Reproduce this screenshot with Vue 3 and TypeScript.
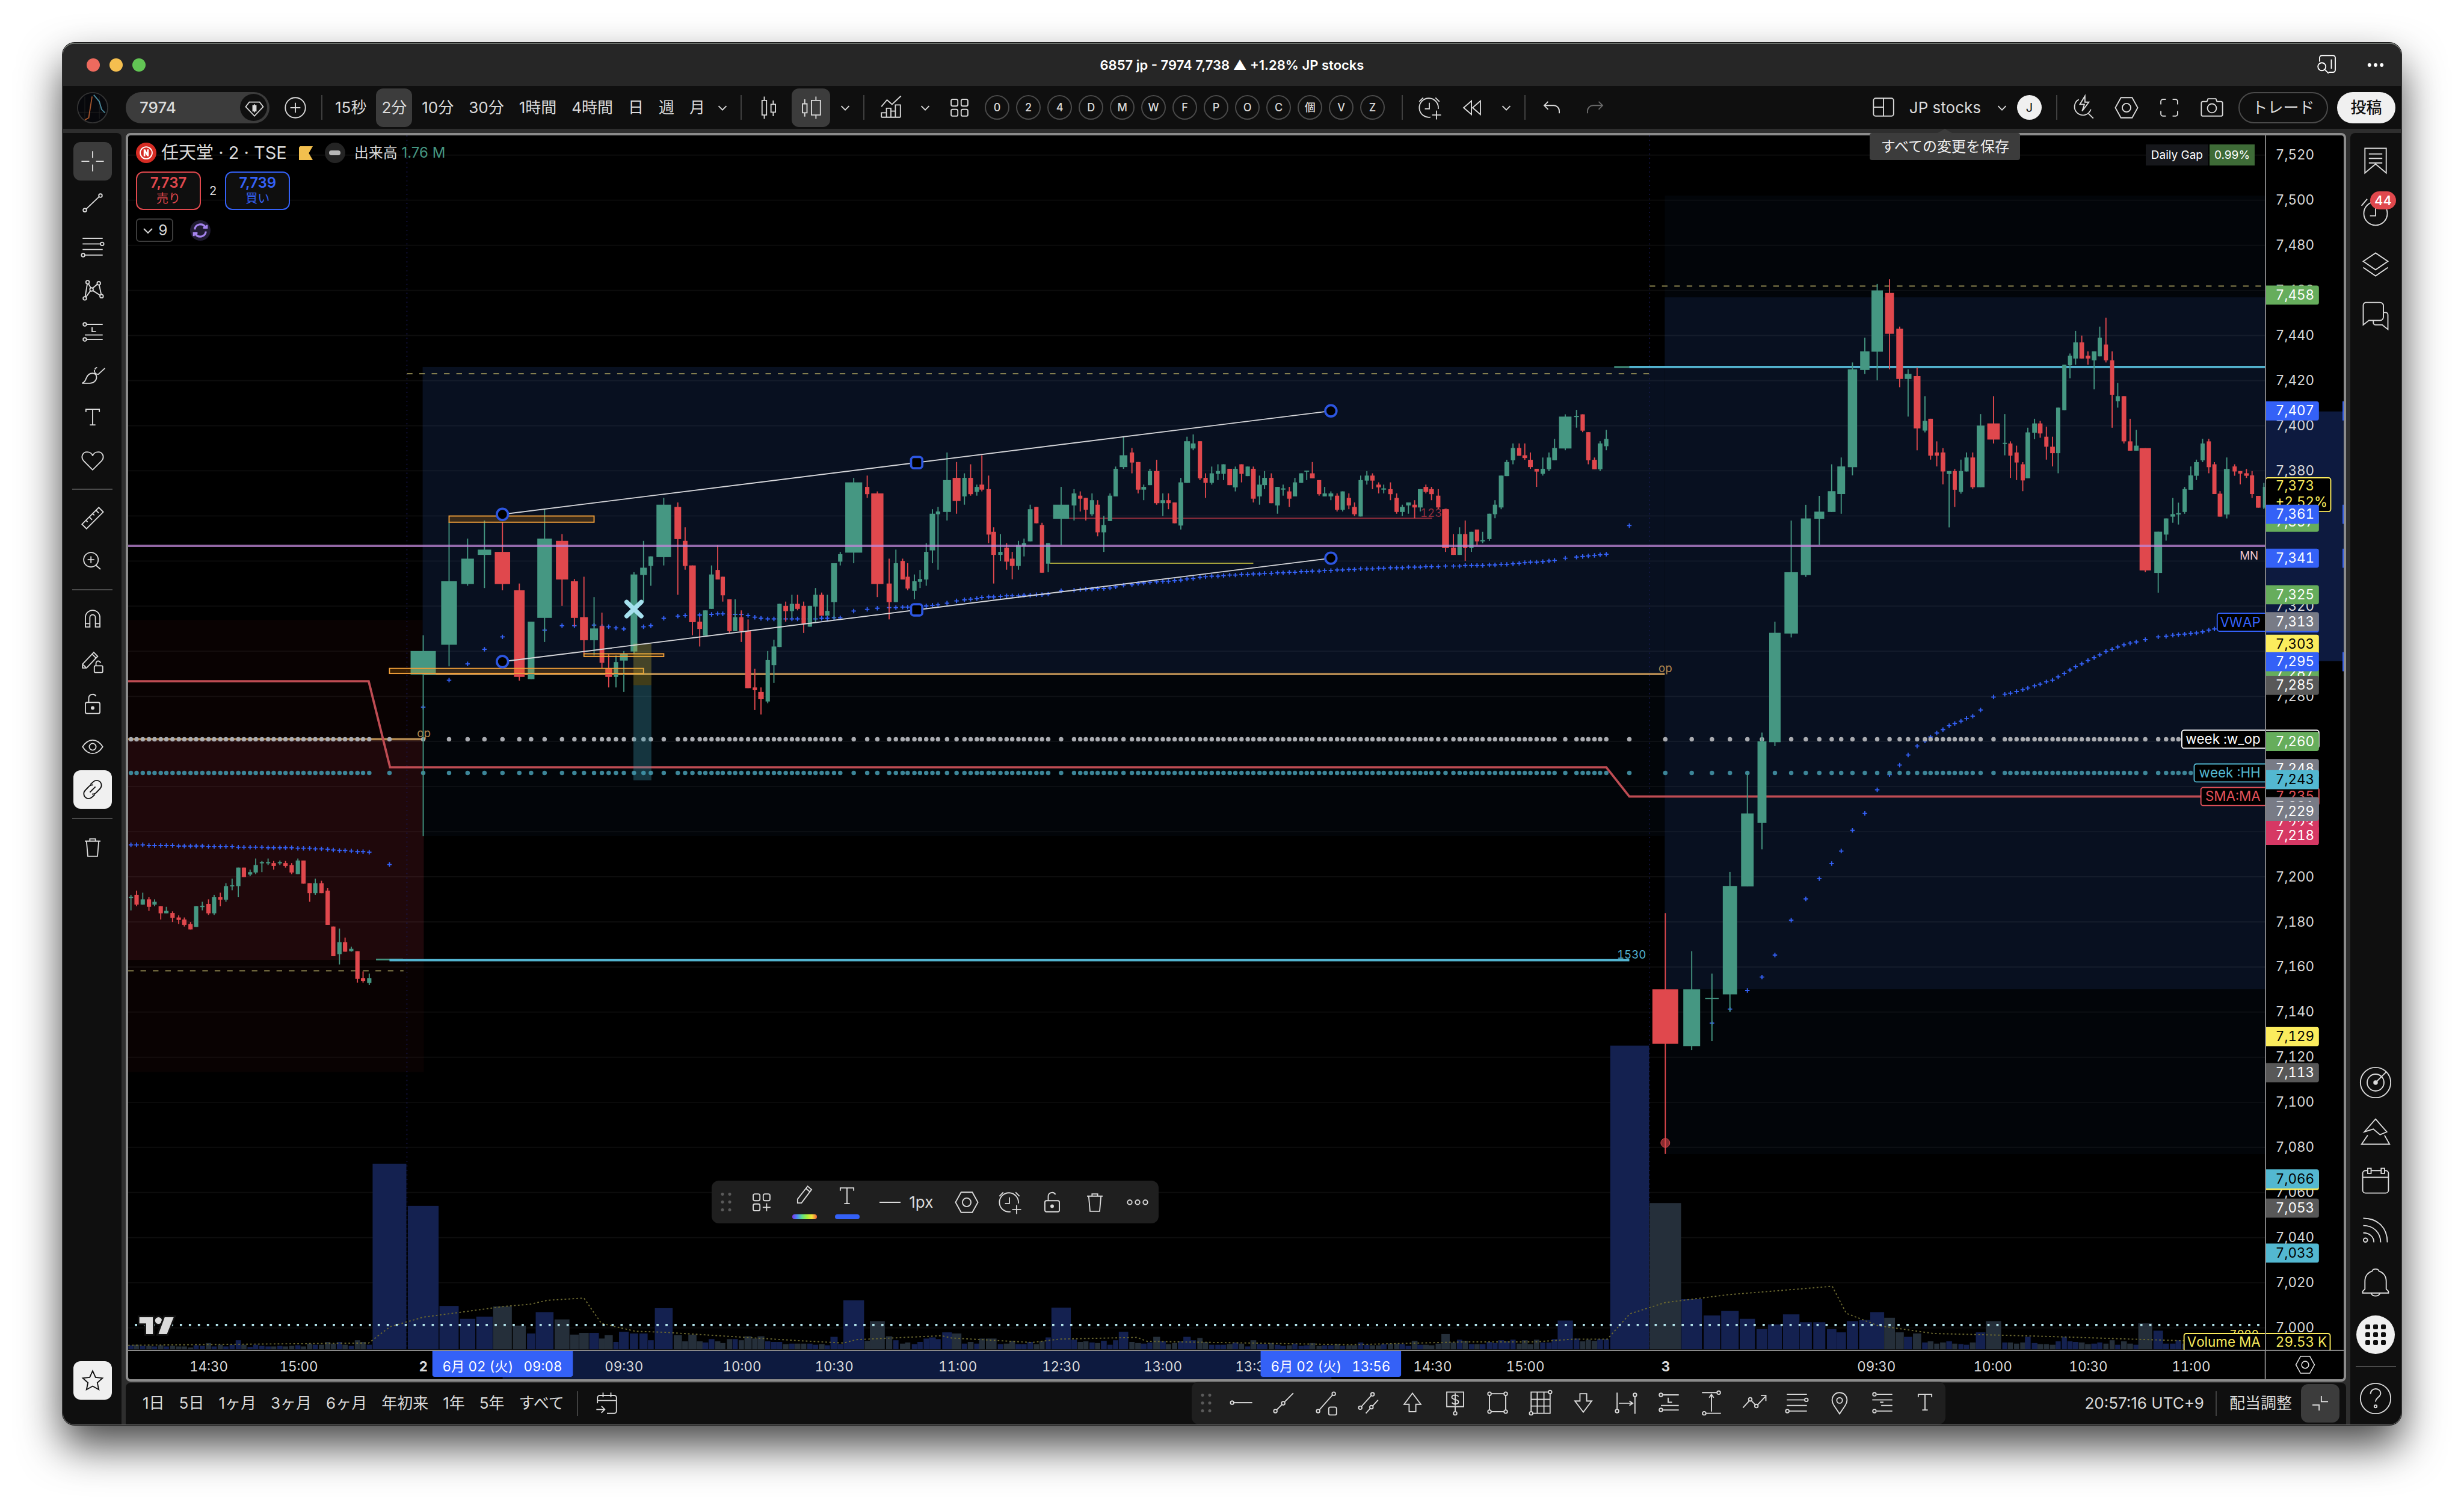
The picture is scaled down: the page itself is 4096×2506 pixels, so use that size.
<script setup lang="ts">
interface Candle { x: number; w: number; top: number; bottom: number; high: number; low: number; up: boolean; vol: number }
interface Stretch { ox: number; oy: number; sx: number; sy: number; rows: string }
interface Tag { y: number; text: string; bg: string; fg?: string; border?: string; w?: number }

/* ---------- icons (28 unit grid) ---------- */
const node = (x: number, y: number, r = 1.5) => `<circle cx="${x}" cy="${y}" r="${r}"/>`
const icons: Record<string, string> = {
  chevron: '<path d="M10.500 12.500l3.500 3.500 3.500-3.500"/>',
  plusCircle: '<circle cx="14" cy="14" r="9"/><path d="M14 9.500v9M9.500 14h9"/>',
  diamond: '<path d="M9 8h10l3.500 4.500L14 21.500 5.500 12.500z"/><path fill="currentColor" d="M12.500 11.500h3v5h-3z"/><path d="M14 10v8"/>',
  candles: '<path d="M8.500 7.500h4v13h-4zM10.500 4v3.500M10.500 20.500v3.500M16.500 11h4v7h-4zM18.500 7.500v3.500M18.500 18v3.500"/>',
  volCandles: '<path d="M6.500 10.500h4v8h-4zM8.500 6.500v4M8.500 18.500v3.500M14.500 7.500h8v13h-8zM18.500 4v3.500M18.500 20.500v3.500"/>',
  indicators: '<path d="M5.500 13l5-6 4.500 4 8-7.500M5.500 22.500h17M5.500 22.500v-4h4.500v4M10 22.500v-8h4v8M14 17h4M18 22.500v-11h4.500v11"/>',
  grid: '<rect x="6.500" y="6.500" width="6" height="6" rx="1.500"/><rect x="15.500" y="6.500" width="6" height="6" rx="1.500"/><rect x="6.500" y="15.500" width="6" height="6" rx="1.500"/><rect x="15.500" y="15.500" width="6" height="6" rx="1.500"/>',
  gridPlus: '<rect x="6.500" y="6.500" width="6" height="6" rx="1.500"/><rect x="15.500" y="6.500" width="6" height="6" rx="1.500"/><rect x="6.500" y="15.500" width="6" height="6" rx="1.500"/><path d="M18.500 15v7M15 18.500h7"/>',
  alarmAdd: '<path d="M15 22.400A8.500 8.500 0 1 1 22 15M5 8.500L8.500 5M23 8.500L19.500 5M14 9.500v5.500h-4M20.500 16.500v8M16.500 20.500h8"/>',
  rewind: '<path d="M13.500 8v12L6.500 14zM21.500 8v12L14.500 14z"/>',
  undo: '<path d="M10.500 8.500L7 12l3.500 3.500M7 12h8.500a5 5 0 0 1 5 5v2"/>',
  redo: '<path d="M17.500 8.500L21 12l-3.500 3.500M21 12h-8.500a5 5 0 0 0-5 5v2"/>',
  layout: '<rect x="4.500" y="5.500" width="18" height="16" rx="2"/><path d="M13.500 5.500v16M4.500 13.500h9"/>',
  boltSearch: '<path d="M9.500 6.600a7.500 7.500 0 1 0 10.800 8.900M18 19l4.500 4.500M15 3.500l-4.500 7.500h4l-2 6 6-8h-3.500z"/>',
  hex: '<path d="M9 5h10l5 9-5 9H9l-5-9z"/><circle cx="14" cy="14" r="3.800"/>',
  fullscreen: '<path d="M6.500 11V8.500a2 2 0 0 1 2-2H11M17 6.500h2.500a2 2 0 0 1 2 2V11M21.500 17v2.500a2 2 0 0 1-2 2H17M11 21.500H8.500a2 2 0 0 1-2-2V17"/>',
  camera: '<path d="M6 8.500h3.500l1-2.500h7l1 2.500H22a1.500 1.500 0 0 1 1.500 1.500v10a1.500 1.500 0 0 1-1.500 1.500H6A1.500 1.500 0 0 1 4.500 20V10A1.500 1.500 0 0 1 6 8.500z"/><circle cx="14" cy="14.500" r="4"/>',
  windowSearch: '<path d="M7 11V7.500A2 2 0 0 1 9 5.500h10a2 2 0 0 1 2 2v11a2 2 0 0 1-2 2h-4M17.500 9v8.500"/><circle cx="9" cy="15.500" r="3.500"/><path d="M11.500 18l3.500 3.500"/>',
  more: '<g fill="currentColor" stroke="none"><circle cx="8.500" cy="14" r="1.600"/><circle cx="14" cy="14" r="1.600"/><circle cx="19.500" cy="14" r="1.600"/></g>',
  cross: '<path d="M14 5v6M14 17v6M4 14h7M17 14h7"/>',
  trend: `${node(7, 19.500)}${node(21, 6.500)}<path d="M8.200 18.500L19.800 7.500"/>`,
  fib: `<path d="M5 6.500h18M5 11.500h16M5 16.500h18M7 21.500h16"/>${node(22.500, 11.500)}${node(5.500, 21.500)}`,
  pattern: `${node(7, 22)}${node(9.500, 7.500)}${node(13, 14)}${node(19.500, 8.500)}${node(22, 20)}<path d="M7.300 20.500L9.200 9M10.200 8.900l2.200 3.700M14 12.900l4.200-3.600M19.800 10l1.900 8.500M8 20.800l4-5.500M14.200 15l6.500 4.300"/>`,
  longPos: `<path d="M9 7h14M9 20.500h14M7 16.500h16M13.500 9.500v4H17"/>${node(7, 7)}${node(7, 20.500)}`,
  brush: '<path d="M4.500 21.500c3-1 3-3 4-5 1-2.500 3-4 5.500-4 2.500 0 3.500 2 3.500 3.500 0 3-2.500 5.500-6 5.500zM15.500 9.500c0 2.500 1.500 4 3.500 4L25 8M16 9c.5-1 1-1.500 2-1.500"/>',
  text: '<path d="M8 9V6.500h12V9M14 6.500v14M11.500 20.500h5"/>',
  heart: '<path d="M14 22.500L6 14.500C3 11 5 6.500 9 6.500c2.500 0 4.500 1.500 5 3.500.5-2 2.500-3.500 5-3.500 4 0 6 4.500 3 8z"/>',
  ruler: '<path d="M4.500 19.500l15-15 4 4-15 15zM8 16l1.500 1.500M11 13l2.500 2.500M14 10l1.500 1.500M17 7l2.500 2.500"/>',
  zoomIn: '<circle cx="12.500" cy="13" r="6.500"/><path d="M12.500 10v6M9.500 13h6M17 18l4 3.500"/>',
  magnet: '<path d="M7.500 21.500V13a6.500 6.500 0 0 1 13 0v8.500h-4V13a2.500 2.500 0 0 0-5 0v8.500zM7.500 18.500h4M16.500 18.500h4"/>',
  pencilLock: '<path d="M5 20v-3.500L15 6l3.500 3.500L8.500 20zM13.500 7.500l3.500 3.500M5.500 17L8 19.500"/><rect x="15.500" y="18" width="7.500" height="6" rx="1"/><path d="M17 18v-2a2 2 0 0 1 4-.5"/>',
  unlock: '<rect x="7.500" y="12.500" width="13" height="10" rx="1.500"/><path d="M10.500 12.500V9a3.500 3.500 0 0 1 6.500-2"/><circle cx="14" cy="17.500" r="1.100" fill="currentColor"/>',
  eye: '<path d="M5 14c5-8 13-8 18 0-5 8-13 8-18 0z"/><circle cx="14" cy="14" r="3"/>',
  link: '<path d="M12 9.500l2.500-2.300a4.300 4.300 0 0 1 6.200 6L17 17M16 18.500l-2.500 2.300a4.300 4.300 0 0 1-6.200-6L11 11M17 17c-1 .9-2.300 1.300-3.500 1M11 11c1-.9 2.300-1.300 3.500-1M11.500 16.500l5-5"/>',
  trash: '<path d="M7 8.500h14M8.500 8.500l1.200 13.500h8.600L19.500 8.500M11.500 8.500v-2h5v2"/>',
  star: '<path d="M14 5.500l2.600 5.700 6.200.7-4.600 4.200 1.300 6.100L14 19.100l-5.500 3.100 1.300-6.100-4.600-4.200 6.200-.7z"/>',
  pencil: '<path d="M8 20v-3.500L17 5l3.500 3L11.500 20zM15.500 7l3.500 3"/>',
  dots3: `${node(7, 14, 2)}${node(14, 14, 2)}${node(21, 14, 2)}`,
  goto: '<path d="M5.500 14V9a2 2 0 0 1 2-2h13a2 2 0 0 1 2 2v12a2 2 0 0 1-2 2H14M5.500 11.500h17M10.500 4.500v4M17.500 4.500v4M4.500 19.500h7.500M9 16.500l3 3-3 3"/>',
  hRay: `${node(5.500, 14)}<path d="M7 14h16.500"/>`,
  infoLine: `${node(6, 21.500)}${node(13, 14.500)}<path d="M7 20.500l5-5M14 13.500l8-8"/>`,
  rayBox: `${node(6, 21.500)}${node(20, 6)}<path d="M7 20.500L19 7"/><rect x="15.500" y="18" width="7" height="7" rx="1.500"/>`,
  channel: `${node(5.500, 18.500)}${node(16.500, 6.500)}${node(15.500, 18)}<path d="M6.500 17.500l9-10M10.500 23.500l4-4.500M16.500 17l5-5.500"/>`,
  arrowUp: '<path d="M14 5.500L21.500 15.500H17v6.500h-6v-6.500H6.500z"/>',
  priceNote: `<path d="M6.500 4.500h15v13h-15z"/><path d="M17 8.500c-.8-1-1.700-1.300-3-1.300-1.800 0-3 .8-3 2 0 2.700 6 1.300 6 4 0 1.200-1.200 2-3 2-1.300 0-2.400-.4-3-1.300M14 5.500v11M14 17.500v4"/>${node(14, 23.500)}`,
  rect: `${node(6.500, 6)}${node(21, 6)}${node(6.500, 22)}${node(21, 22)}<path d="M8 6h11.500M8 22h11.500M6.500 7.500v13M21 7.500v13"/>`,
  gridBox: `${node(22.500, 4.500)}${node(5.500, 23.500)}<path d="M5.500 22V4.500H21M22.500 6v17.500H7M11 4.500v19M17 4.500v19M5.500 11h17M5.500 17h17"/>`,
  arrowDown: '<path d="M14 22.500L6.500 12.500H11V6h6v6.500h4.500z"/>',
  dateRange: `${node(6, 21.500)}${node(22, 7)}<path d="M6 5v15M22 8.500V24M7.500 14.500h12M17 12.500l3 2-3 2"/>`,
  priceRange: `${node(20.500, 5)}${node(7.500, 23.500)}<path d="M5.500 5H19M9 23.500h13.500M14 22V7M12 9.500l2-3 2 3"/>`,
  zigzag: `${node(10.500, 11)}${node(16, 17)}<path d="M4 18.500l5.500-6M11.500 12.200l3.500 3.600M17 16l7-7.500M20 7.500h4.500v5"/>`,
  pin: '<path d="M14 24l-5-7.500c-4-6 0-11.500 5-11.500s9 5.500 5 11.500z"/><circle cx="14" cy="12" r="2.500"/>',
  shortPos: `<path d="M9 6.500h14M5 11.500h18M9 21.500h14M13 16.500h10"/>${node(7, 6.500)}${node(7, 21.500)}<path d="M15 13.500h-3"/>`,
  collapse: '<path d="M7 15.500h6v5M15 7.500v5h6"/>',
  sync: '<path d="M8 13a6.200 6.200 0 0 1 11.500-2.500M20 15a6.200 6.200 0 0 1-11.500 2.500M17 11h4v-3M11 17H7v3"/>',
}
/* wide rail icons (44 unit grid) */
const rail: Record<string, string> = {
  list: '<path d="M12.500 11h19v22l-9.500-8-9.500 8zM16 16h12M16 20h12M16 24h12"/>',
  alarm: '<circle cx="22" cy="23" r="10.500"/><path d="M22 16v9h-5M9.500 16l5-6"/>',
  layers: '<path d="M22 12l11 7.500L22 27l-11-7.500zM11 25l11 7.500L33 25"/>',
  chat: '<path d="M13 10h13a3 3 0 0 1 3 3v10a3 3 0 0 1-3 3H16l-5 4V13a3 3 0 0 1 2-3zM29 19h2a2 2 0 0 1 2 2v13l-5-4h-6a2 2 0 0 1-2-2v-2"/>',
  radar: '<circle cx="22" cy="22" r="13.500"/><circle cx="22" cy="22" r="7.500"/><circle cx="22" cy="22" r="1.500" fill="currentColor"/><path d="M22 22L31.500 12.500"/>',
  peaks: '<path d="M12 22l10-11.500L32 22l-6 2.500-6-5zM15 25l-5.500 8h25L30 25"/>',
  calendar: '<rect x="10.500" y="12.500" width="23" height="20" rx="2.500"/><path d="M10.500 18.500h23"/><rect x="15" y="10.500" width="3" height="4.500" fill="#0f0f0f"/><rect x="27" y="10.500" width="3" height="4.500" fill="#0f0f0f"/>',
  rss: '<circle cx="13" cy="30.500" r="1.800"/><path d="M11 24c5.500 0 9.500 3.500 9.500 8.500M11 17.500c9 0 15.500 6 15.500 15M11 11c13 0 21.500 8.500 21.500 21.500"/>',
  bell: '<path d="M12.500 28v-7c0-5 3-8 6.500-9 .5-2.500 5.500-2.500 6 0 3.500 1 6.500 4 6.500 9v7l2 2v1.500h-23V30zM18 31.500c1 3.500 7 3.500 8 0"/>',
  help: '<circle cx="22" cy="22" r="13.500"/><path d="M17.500 18c0-6 9-6 9-.5 0 3.500-4.500 3.500-4.500 7.500"/><circle cx="22" cy="29" r="1.200"/>',
}
const leftTools: string[][] = [
  ['cross', 'trend', 'fib', 'pattern', 'longPos', 'brush', 'text', 'heart'],
  ['ruler', 'zoomIn'],
  ['magnet', 'pencilLock', 'unlock', 'eye', 'link'],
  ['trash'],
]
const intervals = ['15秒', '2分', '10分', '30分', '1時間', '4時間', '日', '週', '月']
const templates = ['0', '2', '4', 'D', 'M', 'W', 'F', 'P', 'O', 'C', '個', 'V', 'Z']
const ranges = ['1日', '5日', '1ヶ月', '3ヶ月', '6ヶ月', '年初来', '1年', '5年', 'すべて']
const favourites = ['hRay', 'infoLine', 'rayBox', 'channel', 'arrowUp', 'priceNote', 'rect', 'gridBox', 'arrowDown', 'dateRange', 'longPos', 'priceRange', 'zigzag', 'fib', 'pin', 'shortPos', 'text']

/* ---------- tape: x width top bottom high low volume; negative width = falling ---------- */
const tape: Stretch[] = [
  { ox: 100, oy: 1400, sx: 1.96, sy: 1.3635, rows: `261 15 265 267 260 298 7;280 -15 260 284 250 288 8;301 15 271 284 255 284 6;323 -15 271 289 266 299 6;343 15 277 284 271 288 5;364 -15 288 305 288 320 7;384 15 299 305 289 305 5;405 -15 304 316 300 326 6;427 -15 315 321 310 331 5;447 -15 320 333 315 337 5;468 -15 331 344 326 344 3;488 15 288 338 288 338 7;510 15 287 289 277 298 6;531 -15 282 305 271 309 11;551 15 266 305 260 309 5;572 -15 266 272 255 288 8;592 15 239 272 232 277 5;613 15 237 239 221 249 8;635 15 194 239 194 266 16;655 -15 194 217 194 217 8;676 15 205 211 199 215 4;696 15 188 206 172 210 8;717 15 181 183 178 205 6;739 15 181 183 172 188 5;758 -15 183 190 178 199 5;780 15 181 183 177 188 6;800 -15 183 190 178 194 5;821 -15 188 206 183 210 6;843 15 177 210 172 210 7;863 -15 177 233 177 233 5;884 -15 232 256 232 277 10;903 15 232 256 221 260 8;925 -15 232 256 226 256 8;947 -15 250 333 244 333 13;966 -15 337 409 337 409 10;988 15 375 404 342 429 13;1007 -15 375 398 364 398 8;1029 15 391 397 386 398 6;1050 -15 397 464 397 473 16;1070 -15 462 469 446 473 13;1092 15 462 474 451 479 8` },
  { ox: 700, oy: 700, sx: 1.4255, sy: 2.24, rows: `75 64 1024 1118 961 1761 255;141 40 746 999 510 1085 77;188 32 656 757 576 764 54;231 34 620 641 504 773 58;276 -39 629 757 510 782 76;319 -27 782 1127 755 1142 42;349 17 907 1136 907 1136 28;384 37 576 892 459 988 66;427 -31 585 739 558 844 53;459 -18 746 892 737 925 26;483 -20 889 981 728 1034 29;509 20 934 981 809 1042 29;529 -12 925 1071 871 1092 19;546 -17 1092 1127 1037 1169 25;564 11 1068 1127 1042 1169 13;584 20 1036 1062 1024 1187 31;610 17 719 1026 710 1034 28;634 17 692 721 585 827 28;653 12 647 685 647 764 16;685 37 441 650 414 683 73;721 -17 450 578 432 800 25;740 -12 585 685 531 700 14;758 -17 683 909 683 961 26;777 -12 907 936 889 1006 14;791 12 862 963 862 963 12;807 12 719 856 683 856 18;822 -11 701 739 603 739 14;836 -11 728 802 728 827 11;852 -11 818 945 818 952 18;866 11 889 945 818 945 18;882 -11 889 945 862 988 16;899 -15 943 1172 898 1172 23;916 -11 1169 1180 1095 1259 19;932 -14 1187 1216 1169 1277 23;949 11 1060 1225 1024 1232 14;965 12 1006 1080 979 1151 13;980 11 836 1008 836 1008 13;995 -12 844 865 827 907 9;1010 11 836 865 800 892 10;1025 -12 836 856 800 862 10;1040 -11 844 916 827 952 10;1056 11 844 927 844 927 10;1070 11 800 847 773 909 8;1086 -12 800 883 791 883 9;1100 11 864 883 800 883 7;1117 15 674 829 674 898 22;1133 11 638 668 629 683 9;1167 43 352 632 334 674 87;1201 -11 370 399 325 414 15;1228 -31 396 757 388 809 50;1258 -13 755 829 656 898 23;1275 11 674 829 620 829 16;1291 -11 665 739 656 739 10;1305 -11 728 775 674 782 12;1321 11 746 784 719 818 9;1335 11 737 748 701 773 13;1351 11 629 739 594 764 19;1367 14 477 623 459 674 21;1382 11 468 479 450 700 18;1404 20 343 470 233 504 30;1428 -20 334 426 271 477 28;1448 11 334 408 316 441 10;1464 -12 334 399 280 405 13;1479 11 370 390 361 405 10;1493 -12 361 381 244 388 19;1509 -11 379 560 325 594 19;1523 -12 549 641 531 755 19;1539 11 629 641 558 665 9;1555 -12 612 668 594 700 10` },
  { ox: 1750, oy: 650, sx: 1.3067, sy: 2.24, rows: `66 -11 768 797 741 850 15;81 11 715 797 697 812 9;94 10 706 717 688 759 9;108 11 571 699 553 699 13;123 -10 562 627 562 627 9;136 -10 634 824 625 824 14;150 10 706 788 706 822 21;180 37 553 609 482 715 74;210 11 508 556 491 616 17;225 -10 517 529 500 580 13;238 -10 526 573 526 616 14;252 10 535 591 508 598 12;265 -10 553 663 535 679 11;279 11 634 663 598 741 15;294 10 517 618 508 618 8;307 10 410 520 401 520 16;326 18 356 403 282 410 31;345 -10 345 385 327 428 13;359 -11 383 493 383 508 11;373 11 482 493 473 535 10;387 10 419 475 410 475 12;402 -13 419 547 374 553 22;417 11 535 547 508 598 14;430 -10 535 547 508 571 9;444 -10 544 627 544 627 11;458 11 464 636 446 652 14;473 14 300 466 282 466 22;488 11 309 329 273 336 16;503 -10 300 448 300 455 20;516 -10 446 466 428 526 13;530 10 428 466 401 473 8;545 10 419 430 392 455 8;558 10 392 430 392 455 8;572 -11 410 475 410 475 9;585 11 410 484 401 500 12;600 -10 392 430 392 464 10;614 10 401 439 401 439 5;627 -11 410 529 401 544 16;641 11 473 520 437 553 9;654 11 446 475 419 491 9;669 -10 446 547 428 547 11;683 11 482 556 482 589 8;697 11 488 493 473 517 6;711 -10 500 529 482 562 7;724 10 464 520 446 520 10;738 10 428 466 428 466 6;752 11 417 421 417 455 7;765 -11 428 448 383 448 11;780 -10 455 511 455 517 6;793 10 508 520 482 520 7;807 11 508 520 500 535 7;822 -10 517 573 508 580 9;835 10 500 573 500 580 6;849 -10 526 556 508 571 7;862 -11 562 591 544 598 7;877 10 455 600 437 600 12;891 10 437 457 419 473 8;904 -10 437 457 428 491 7;918 -11 473 484 464 508 7;931 11 488 493 473 508 9;946 -10 491 511 464 535 10;960 -10 526 582 508 589 10;973 11 562 582 553 598 9;988 11 544 556 544 589 6;1002 -11 553 564 535 607 15;1015 11 491 564 491 580 8;1029 -11 482 502 473 508 8;1042 -11 491 511 482 535 7;1057 -10 517 564 491 571 10;1074 -16 571 726 571 741 27;1092 -11 724 753 670 753 12;1107 10 670 753 643 753 17;1120 -10 670 726 616 777 15;1134 10 661 726 661 741 9;1147 -10 652 699 652 715 9;1161 11 694 699 661 706 9;1176 10 589 690 589 697 13;1189 10 553 591 535 607 11;1203 11 437 564 437 571 16;1216 11 383 439 374 439 14;1231 10 327 376 309 392 17;1245 -10 327 358 309 358 10;1258 -11 356 367 309 374 16;1272 -11 374 403 345 410 9;1286 -10 410 421 410 482 17;1300 10 410 430 365 437 12;1314 10 365 412 345 419 12;1327 11 327 376 291 376 18;1353 29 202 329 193 336 51;1378 11 199 204 175 246 19;1393 -10 193 258 193 264 14;1406 -10 264 376 264 392 17;1420 -11 374 412 365 412 15;1434 11 309 412 300 419 18;1448 10 291 320 255 336 18` },
  { ox: 2800, oy: 1400, sx: 1.568, sy: 2.24, rows: `256 -72 804 1021 500 1460 260;330 47 804 1030 652 1046 89;386 38 838 842 741 1010 60;436 40 392 824 336 894 68;484 35 103 394 -57 394 54;525 25 -184 141 -219 246 36` },
  { ox: 2850, oy: 450, sx: 1.0814, sy: 1.568, rows: `333 22 1058 1363 1027 1374 44;364 26 889 1060 745 1071 62;393 19 739 897 701 902 48;419 19 720 740 676 813 48;442 15 663 721 588 721 36;461 15 594 671 569 726 30;482 18 323 596 304 619 50;506 18 273 325 235 336 52;530 22 103 274 85 354 66;554 -17 110 224 72 323 56;573 -13 210 350 204 373 30;589 13 336 350 323 455 22;607 -13 342 488 318 549 28;622 9 467 494 398 499 12;633 -9 461 564 461 575 14;645 -8 555 564 524 594 10;656 -9 555 608 543 644 12;668 9 607 615 607 764 14;679 -8 607 659 601 707 10;691 8 607 665 575 670 9;702 8 569 608 555 608 8;714 -9 569 652 555 657 12;729 15 480 652 448 652 30;754 -24 474 519 398 530 50;775 8 528 531 448 563 12;786 -8 530 564 524 626 12;798 -8 555 583 536 632 10;810 -8 588 633 582 663 12;820 9 499 627 486 627 22;833 9 474 500 461 518 11;844 -9 474 502 467 514 9;855 -8 511 539 483 575 9;867 -9 539 557 511 594 8;878 8 430 557 430 613 14;890 8 310 437 310 437 22;901 8 285 312 279 348 14;912 9 248 293 216 310 13;924 -9 248 293 229 293 12;935 -9 285 293 273 310 9;947 9 273 298 273 379 10;958 8 235 287 204 287 12;970 -8 254 298 179 304 10;982 -8 298 394 273 486 16;993 8 398 412 361 430 8;1005 -9 398 524 398 530 14;1016 -9 524 550 461 550 10;1028 9 536 550 492 550 8;1046 -22 543 884 543 889 46;1071 15 776 891 776 946 33;1086 9 739 784 739 801 10;1099 9 727 734 682 751 10;1110 9 724 728 695 756 16;1121 8 657 721 651 726 10;1133 9 619 659 594 659 12;1144 9 582 620 575 632 10;1156 8 530 577 517 582 12;1168 -8 524 596 517 613 9;1179 -8 588 671 582 671 10;1190 -9 670 734 663 734 10;1203 11 601 728 569 739 10;1218 -8 594 608 588 620 8;1228 -8 607 614 607 644 8;1240 -9 613 620 601 626 8;1251 -8 619 671 607 682 8;1263 -9 676 709 676 709 8;1274 4 651 709 640 713 8` },
]
const candles: Candle[] = tape.flatMap(s =>
  s.rows.split(';').map(row => {
    const [x, w, t, b, h, l, vol] = row.split(' ').map(Number)
    const py = (v: number) => s.oy + v / s.sy
    return { x: Math.round(s.ox + x / s.sx), w: Math.abs(w) / s.sx, top: py(t), bottom: py(b), high: py(h), low: py(l), up: w > 0, vol }
  }),
)
const volumeBase = 2399
const bigVolumes = [{ x: 663, w: 60, h: 330 }, { x: 2865, w: 69, h: 540 }]

/* volume-weighted average, sampled at every bar */
const vwapKnots: number[][] = [[228, 1502], [440, 1506], [550, 1508], [657, 1515], [752, 1258], [799, 1209], [832, 1180], [862, 1154], [894, 1132], [969, 1120], [1000, 1112], [1057, 1111], [1110, 1118], [1158, 1112], [1180, 1099], [1206, 1095], [1277, 1091], [1319, 1092], [1354, 1099], [1377, 1100], [1441, 1100], [1495, 1098], [1519, 1086], [1561, 1081], [1615, 1079], [1669, 1075], [1702, 1068], [1759, 1061], [1865, 1056], [1888, 1050], [1975, 1045], [2000, 1040], [2058, 1034], [2100, 1031], [2145, 1025], [2230, 1020], [2325, 1016], [2400, 1012], [2517, 1008], [2660, 1004], [2703, 1001], [2765, 996], [2785, 992], [2858, 985], [3046, 1819], [3078, 1794], [3109, 1761], [3135, 1737], [3158, 1698], [3187, 1636], [3214, 1597], [3237, 1562], [3258, 1536], [3276, 1513], [3295, 1477], [3318, 1446], [3339, 1405], [3362, 1377], [3380, 1360], [3395, 1342], [3411, 1326], [3446, 1303], [3468, 1290], [3510, 1273], [3524, 1262], [3547, 1239], [3588, 1229], [3652, 1209], [3693, 1185], [3747, 1158], [3779, 1146], [3840, 1132], [3908, 1125], [3945, 1117]]
function vwapAt(x: number): number {
  const i = vwapKnots.findIndex(k => k[0] >= x)
  if (i <= 0) return vwapKnots[0][1]
  const [x0, y0] = vwapKnots[i - 1], [x1, y1] = vwapKnots[i]
  return y0 + ((y1 - y0) * (x - x0)) / (x1 - x0)
}
const plus = (x: number, y: number) => `M${x - 4} ${y}h8M${x} ${y - 4}v8`
const vwapPath = candles.filter(c => c.x < 3942 && (c.x < 2900 || c.x > 3040)).map(c => plus(c.x, Math.round(vwapAt(c.x)))).join('') + plus(693, 1537) + plus(2899, 934)
const barXs = [...candles.map(c => c.x), 693, 2899]
const weekOpen = barXs.filter(x => x < 3880)
const weekHigh = barXs.filter(x => x < 3902)

const yOf = (p: number) => 275 + (7520 - p) * 4.0115
const gridPrices = Array.from({ length: 27 }, (_, i) => 7520 - i * 20)
const comma = (n: number) => n.toLocaleString('en-US')
const ticks = gridPrices.filter(p => ![7360, 7340, 7300, 7260, 7240, 7220].includes(p))

const green = '#66ad5c', blue = '#3461f7', grey = '#787b86', dark = '#585858', cyan = '#53b8d1', yellow = '#fbec5d', pink = '#d63864'
const tags: Tag[] = [
  { y: 524, text: '7,458', bg: green },
  { y: 730, text: '7,407', bg: blue },
  { y: 928, text: '7,357', bg: green },
  { y: 914, text: '7,361', bg: blue },
  { y: 992, text: '7,341', bg: blue },
  { y: 1057, text: '7,325', bg: green },
  { y: 1107, text: '7,312', bg: blue },
  { y: 1105, text: '7,313', bg: grey },
  { y: 1145, text: '7,303', bg: yellow, fg: '#000' },
  { y: 1196, text: '7,287', bg: green },
  { y: 1176, text: '7,295', bg: blue },
  { y: 1218, text: '7,285', bg: dark },
  { y: 1314, text: '7,261', bg: '#000', border: '#fff' },
  { y: 1318, text: '7,260', bg: green },
  { y: 1366, text: '7,248', bg: grey },
  { y: 1416, text: '7,235', bg: '#000', fg: '#e4525a', border: '#e4525a' },
  { y: 1386, text: '7,243', bg: cyan, fg: '#000' },
  { y: 1434, text: '7,231', bg: grey },
  { y: 1466, text: '7,223', bg: pink },
  { y: 1442, text: '7,229', bg: grey },
  { y: 1485, text: '7,218', bg: pink },
  { y: 1843, text: '7,129', bg: yellow, fg: '#000' },
  { y: 1907, text: '7,113', bg: dark },
  { y: 2099, text: '7,065', bg: yellow },
  { y: 2096, text: '7,066', bg: cyan, fg: '#000' },
  { y: 2148, text: '7,053', bg: dark },
  { y: 2228, text: '7,033', bg: cyan, fg: '#000' },
  { y: 2387, text: '29.53 K', bg: '#000', fg: yellow, border: yellow, w: 114 },
]
const lineTags = [
  { x: 3945, y: 1106, text: 'VWAP', c: '#3461f7' },
  { x: 3882, y: 1314, text: 'week :w_op', c: '#ffffff' },
  { x: 3904, y: 1374, text: 'week :HH', c: '#53b8d1' },
  { x: 3916, y: 1416, text: 'SMA:MA', c: '#e4525a' },
  { x: 3886, y: 2387, text: 'Volume MA', c: '#fbec5d' },
]
const times: [number, string][] = [[371, '14:30'], [531, '15:00'], [1110, '09:30'], [1320, '10:00'], [1484, '10:30'], [1704, '11:00'], [1888, '12:30'], [2069, '13:00'], [2232, '13:30'], [2549, '14:30'], [2714, '15:00'], [3339, '09:30'], [3546, '10:00'], [3716, '10:30'], [3899, '11:00']]
const rangeBadges: [number, string][] = [[769, '09:08'], [2243, '13:56']]
const handles = [[894, 914], [2368, 730], [894, 1176], [2368, 992]]
const midHandles = [[1631, 822], [1631, 1084]]
const volumeMa = '228,2392 656,2388 694,2359 753,2342 814,2334 896,2323 943,2319 974,2312 1039,2308 1070,2353 1130,2367 1184,2369 1327,2378 1425,2384 1501,2388 1523,2382 1675,2375 1693,2379 1836,2387 1885,2381 2023,2378 2041,2385 2226,2388 2402,2391 2605,2386 2731,2386 2801,2381 2860,2381 2900,2336 2963,2316 3075,2302 3200,2292 3260,2287 3285,2335 3341,2357 3440,2371 3635,2376 3886,2384'
</script>

<template>
  <div class="page">
    <main class="window">
      <header class="titlebar">
        <div class="lights"><i class="red" /><i class="amber" /><i class="lime" /></div>
        <h1>6857 jp - 7974 7,738 ▲ +1.28% JP stocks</h1>
        <div class="title-tools">
          <button aria-label="ウィンドウ検索"><svg class="ic" viewBox="0 0 28 28" v-html="icons.windowSearch" /></button>
          <button aria-label="その他"><svg class="ic" viewBox="0 0 28 28" v-html="icons.more" /></button>
        </div>
      </header>

      <nav class="topbar">
        <button class="avatar" aria-label="プロフィール">
          <svg viewBox="0 0 56 56"><circle cx="28" cy="28" r="27" fill="#07080c" stroke="#333" stroke-width="2" /><path d="M4 36h48M14 8v40M40 8v40" stroke="#222" /><path d="M14 50l7-4 6-38" stroke="#a3542c" fill="none" stroke-width="2" /><path d="M30 5l10 12 4 14 6 6" stroke="#4b8a9c" fill="none" stroke-width="2" /></svg>
        </button>
        <button class="symbol">7974<span><svg class="ic" viewBox="0 0 28 28" v-html="icons.diamond" /></span></button>
        <button class="tool" aria-label="比較"><svg class="ic" viewBox="0 0 28 28" v-html="icons.plusCircle" /></button>
        <i class="sep" />
        <button v-for="t in intervals" :key="t" class="interval" :class="{ on: t === '2分' }">{{ t }}</button>
        <button class="chev" aria-label="時間足"><svg class="ic" viewBox="0 0 28 28" v-html="icons.chevron" /></button>
        <i class="sep" />
        <button class="tool" aria-label="ローソク足"><svg class="ic" viewBox="0 0 28 28" v-html="icons.candles" /></button>
        <button class="tool on" aria-label="出来高ローソク足"><svg class="ic" viewBox="0 0 28 28" v-html="icons.volCandles" /></button>
        <button class="chev" aria-label="チャートタイプ"><svg class="ic" viewBox="0 0 28 28" v-html="icons.chevron" /></button>
        <i class="sep" />
        <button class="tool" aria-label="インジケーター"><svg class="ic" viewBox="0 0 28 28" v-html="icons.indicators" /></button>
        <button class="chev" aria-label="お気に入り"><svg class="ic" viewBox="0 0 28 28" v-html="icons.chevron" /></button>
        <button class="tool" aria-label="テンプレート"><svg class="ic" viewBox="0 0 28 28" v-html="icons.grid" /></button>
        <div class="templates"><button v-for="t in templates" :key="t">{{ t }}</button></div>
        <i class="sep" />
        <button class="tool" aria-label="アラート"><svg class="ic" viewBox="0 0 28 28" v-html="icons.alarmAdd" /></button>
        <button class="tool" aria-label="リプレイ"><svg class="ic" viewBox="0 0 28 28" v-html="icons.rewind" /></button>
        <button class="chev" aria-label="リプレイ設定"><svg class="ic" viewBox="0 0 28 28" v-html="icons.chevron" /></button>
        <i class="sep" />
        <button class="tool" aria-label="元に戻す"><svg class="ic" viewBox="0 0 28 28" v-html="icons.undo" /></button>
        <button class="tool dim" aria-label="やり直す"><svg class="ic" viewBox="0 0 28 28" v-html="icons.redo" /></button>
        <div class="topright">
          <button class="tool" aria-label="レイアウト"><svg class="ic" viewBox="0 0 28 28" v-html="icons.layout" /></button>
          <div class="save">
            <button>JP stocks</button>
            <div class="tooltip" role="tooltip">すべての変更を保存</div>
          </div>
          <button class="chev" aria-label="レイアウト管理"><svg class="ic" viewBox="0 0 28 28" v-html="icons.chevron" /></button>
          <button class="account">J</button>
          <i class="sep" />
          <button class="tool" aria-label="クイック検索"><svg class="ic" viewBox="0 0 28 28" v-html="icons.boltSearch" /></button>
          <button class="tool" aria-label="設定"><svg class="ic" viewBox="0 0 28 28" v-html="icons.hex" /></button>
          <button class="tool" aria-label="全画面"><svg class="ic" viewBox="0 0 28 28" v-html="icons.fullscreen" /></button>
          <button class="tool" aria-label="スナップショット"><svg class="ic" viewBox="0 0 28 28" v-html="icons.camera" /></button>
          <button class="pill">トレード</button>
          <button class="pill solid">投稿</button>
        </div>
      </nav>

      <div class="body">
        <aside class="leftbar">
          <template v-for="(group, g) in leftTools" :key="g">
            <i v-if="g" class="rule" />
            <button v-for="n in group" :key="n" class="tool" :class="{ on: n === 'cross', lit: n === 'link' }" :aria-label="n"><svg class="ic" viewBox="0 0 28 28" v-html="icons[n]" /></button>
          </template>
          <button class="tool lit last" aria-label="お気に入りツール"><svg class="ic" viewBox="0 0 28 28" v-html="icons.star" /></button>
        </aside>

        <section class="center">
          <div class="frame">
            <div class="pane">
              <svg class="plot" viewBox="228 240 3804 2162">
                <g>
                  <rect x="228" y="1102" width="526" height="212" fill="#090202" />
                  <rect x="228" y="1314" width="526" height="393" fill="#1f080b" />
                  <rect x="228" y="1707" width="526" height="199" fill="#090202" />
                  <rect x="752" y="652" width="2210" height="546" fill="#081020" />
                  <rect x="752" y="1198" width="2210" height="288" fill="#020509" />
                  <rect x="2962" y="347" width="1070" height="181" fill="#020509" />
                  <rect x="2962" y="528" width="1070" height="1231" fill="#081020" />
                  <rect x="2962" y="1759" width="1070" height="293" fill="#020509" />
                </g>
                <line v-for="p in gridPrices" :key="p" x1="228" x2="4030" :y1="yOf(p)" :y2="yOf(p)" stroke="#fff" stroke-opacity=".05" stroke-width="2" />
                <path d="M724 240V2400M2935 240V2400" stroke="#1b1b5c" stroke-opacity=".7" stroke-width="2" stroke-dasharray="2 6" />
                <g>
                  <rect v-for="b in bigVolumes" :key="b.x" :x="b.x" :y="volumeBase - b.h" :width="b.w" :height="b.h" fill="#142150" />
                  <rect v-for="c in candles" :key="c.x" :x="c.x - c.w * 0.61" :y="volumeBase - c.vol" :width="c.w * 1.22" :height="c.vol" :fill="c.up ? '#142150' : '#252f3a'" />
                </g>
                <polyline :points="volumeMa" fill="none" stroke="#6b6830" stroke-width="2" stroke-dasharray="3 4" />
                <path d="M240 2356H4024" stroke="#b5e6ee" stroke-width="4" stroke-dasharray="4 12" />
                <path d="M724 664H2935M2935 508H4030M228 1726H718" fill="none" stroke="#a39b5c" stroke-width="2" stroke-dasharray="10 12" />
                <path d="M228 1314H752M752 1198H2962" stroke="#b28850" stroke-width="4" />
                <path d="M669 1706H717M2872 652H2927" stroke="#43937f" stroke-width="3" />
                <path d="M693 1707H2899M2899 652H4030" stroke="#53b4d0" stroke-width="4" />
                <path :d="vwapPath" stroke="#3461f7" stroke-width="2" />
                <circle v-for="x in weekOpen" :key="x" :cx="x" cy="1314" r="4" fill="#a9abb0" />
                <circle v-for="x in weekHigh" :key="x" :cx="x" cy="1374" r="4" fill="#3c8598" />
                <path d="M228 1211H656L694 1364H2858L2899 1416H3916" fill="none" stroke="#be4c53" stroke-width="4" />
                <path d="M1902 921H2548" stroke="#8f2d3c" stroke-width="2" />
                <path d="M1868 1001H2230" stroke="#a5a23c" stroke-width="2" />
                <g class="t20">
                  <text x="2527" y="919" fill="#8f2d3c">1230</text>
                  <text x="2877" y="1704" fill="#53b4d0">1530</text>
                  <text x="742" y="1310" fill="#b28850">op</text>
                  <text x="2951" y="1195" fill="#b28850">op</text>
                  <text x="3985" y="995" fill="#f0c8cc">MN</text>
                </g>
                <g v-for="c in candles" :key="c.x" :fill="c.up ? '#459782' : '#e0484d'">
                  <rect :x="c.x - 1" :y="c.high" width="2" :height="c.low - c.high" />
                  <rect :x="c.x - c.w / 2" :y="c.top" :width="c.w" :height="Math.max(2, c.bottom - c.top)" />
                </g>
                <circle cx="2963" cy="2032" r="8" fill="#e0484d" fill-opacity=".6" stroke="#e0484d" />
                <path d="M228 970H4030" stroke="#c088d8" stroke-opacity=".76" stroke-width="4" />
                <g fill="#ff9800" fill-opacity=".2" stroke="#f2a03a" stroke-width="2">
                  <rect x="799" y="917" width="258" height="11" />
                  <rect x="1039" y="1162" width="142" height="5" />
                  <rect x="693" y="1188" width="452" height="9" />
                </g>
                <rect x="1127" y="1144" width="32" height="74" fill="#c8b43c" fill-opacity=".32" />
                <rect x="1127" y="1218" width="32" height="169" fill="#3d9ab0" fill-opacity=".32" />
                <path d="M1115 1070l26 25M1141 1070l-26 25" stroke="#a5e0ee" stroke-width="8" stroke-linecap="round" />
                <path d="M894 914L2368 730M894 1176L2368 992" stroke="#d5d6da" stroke-width="2" />
                <g fill="#000" stroke="#2d56e0" stroke-width="4">
                  <circle v-for="h in handles" :key="h.join()" :cx="h[0]" :cy="h[1]" r="10" />
                  <rect v-for="h in midHandles" :key="h.join()" :x="h[0] - 10" :y="h[1] - 10" width="20" height="20" rx="5" />
                </g>
                <g fill="#dbdbdb" stroke="#111" stroke-width="6" paint-order="stroke">
                  <path d="M248 2342h24v30h-12v-19h-12z" /><circle cx="282" cy="2348" r="6" /><path d="M293 2342h16l-12 30h-15z" />
                </g>
                <text class="t20" x="3967" y="2380" fill="#fbec5d">7000</text>
                <g v-for="t in lineTags" :key="t.text">
                  <rect :x="t.x" :y="t.y - 16" :width="4034 - t.x" height="32" rx="4" fill="#000" :stroke="t.c" stroke-width="2" />
                  <text class="t24" x="4022" :y="t.y + 8" text-anchor="end" :fill="t.c">{{ t.text }}</text>
                </g>
                <path d="M4031 240V2402M228 2401H4032" stroke="#8a8a8a" stroke-width="2" />
              </svg>

              <div class="legend">
                <div class="legend-title">
                  <svg class="logo" viewBox="0 0 36 36"><circle cx="18" cy="18" r="18" fill="#d62c24" /><circle cx="18" cy="18" r="10.500" fill="none" stroke="#fff" stroke-width="2" /><path d="M13.500 24V12h3l3 6v-6h3v12h-3l-3-6v6z" fill="#fff" /></svg>
                  <h2>任天堂 · 2 · TSE</h2>
                  <svg class="flag" viewBox="0 0 24 24"><path d="M2 0h22l-7 12 7 12H0V2z" fill="#f2bf4e" /></svg>
                  <span class="market"><i /></span>
                  <span class="vol">出来高 <b>1.76 M</b></span>
                </div>
                <div class="quotes">
                  <button class="quote sell"><b>7,737</b>売り</button>
                  <span>2</span>
                  <button class="quote buy"><b>7,739</b>買い</button>
                </div>
                <div class="folds">
                  <button class="fold"><svg viewBox="9 9 10 10" v-html="icons.chevron" />9</button>
                  <span class="sync"><svg viewBox="3 3 22 22" v-html="icons.sync" /></span>
                </div>
              </div>

              <table class="gap"><tbody><tr><th scope="row">Daily Gap</th><td>0.99%</td></tr></tbody></table>

              <div class="float">
                <i class="grip" />
                <button class="tool" aria-label="テンプレート"><svg class="ic" viewBox="0 0 28 28" v-html="icons.gridPlus" /></button>
                <button class="tool ink" aria-label="線の色"><svg class="ic" viewBox="0 0 28 28" v-html="icons.pencil" /><i class="swatch rainbow" /></button>
                <button class="tool ink" aria-label="文字の色"><svg class="ic" viewBox="0 0 28 28" v-html="icons.text" /><i class="swatch" /></button>
                <button class="weight"><i />1px</button>
                <button v-for="n in ['hex', 'alarmAdd', 'unlock', 'trash', 'dots3']" :key="n" class="tool" :aria-label="n"><svg class="ic" viewBox="0 0 28 28" v-html="icons[n]" /></button>
              </div>
            </div>

            <svg class="plot" viewBox="4032 240 138 2162">
              <rect x="4032" y="731" width="138" height="444" fill="#0d1a3f" />
              <path d="M4169 713v34M4169 897v34M4169 975v34M4169 1159v34" stroke="#3461f7" stroke-width="2" />
              <g class="t24" fill="#dbdbdb"><text v-for="p in ticks" :key="p" x="4049" :y="yOf(p) + 8">{{ comma(p) }}</text></g>
              <g class="t24">
                <rect x="4031" y="849" width="116" height="60" rx="4" fill="#000" stroke="#fbec5d" stroke-width="2" />
                <text x="4049" y="872" fill="#fbec5d">7,373</text><text x="4049" y="900" fill="#fbec5d">+2.52%</text>
                <g v-for="t in tags" :key="t.text">
                  <rect x="4028" :y="t.y - (t.border ? 16 : 17)" :width="(t.w ?? 94) + 4" :height="t.border ? 32 : 34" rx="4" :fill="t.bg" :stroke="t.border" stroke-width="2" />
                  <text x="4049" :y="t.y + 8" :fill="t.fg ?? '#fff'">{{ t.text }}</text>
                </g>
              </g>
              <path d="M4032 2401H4170" stroke="#8a8a8a" stroke-width="2" />
            </svg>

            <svg class="plot" viewBox="228 2402 3804 50">
              <rect x="894" y="2402" width="1475" height="50" fill="#0d1a3f" />
              <g class="t24" fill="#dbdbdb" text-anchor="middle">
                <text v-for="t in times" :key="t[0]" :x="t[0]" y="2438">{{ t[1] }}</text>
                <text class="strong" x="753" y="2438">2</text><text class="strong" x="2964" y="2438">3</text>
              </g>
              <g v-for="b in rangeBadges" :key="b[0]" class="t24" fill="#fff">
                <rect :x="b[0]" y="2396" width="250" height="52" rx="4" fill="#3461f7" />
                <text :x="b[0] + 18" y="2438">6月 02 (火)</text><text :x="b[0] + 231" y="2438" text-anchor="end">{{ b[1] }}</text>
              </g>
              <path d="M4031 2402v50" stroke="#8a8a8a" stroke-width="2" />
            </svg>
            <button class="axis-set" aria-label="スケール設定"><svg viewBox="3 3 22 22" v-html="icons.hex" /></button>
          </div>

          <footer class="bottom">
            <button v-for="r in ranges" :key="r" class="range">{{ r }}</button>
            <i class="sep" />
            <button class="tool" aria-label="日付へ移動"><svg class="ic" viewBox="0 0 28 28" v-html="icons.goto" /></button>
            <div class="favs">
              <i class="grip" />
              <button v-for="n in favourites" :key="n" class="tool" :aria-label="n"><svg class="ic" viewBox="0 0 28 28" v-html="icons[n]" /></button>
            </div>
            <div class="clock">
              <button>20:57:16 UTC+9</button><i class="sep" /><button>配当調整</button>
              <button class="tool on" aria-label="折りたたむ"><svg class="ic" viewBox="0 0 28 28" v-html="icons.collapse" /></button>
            </div>
          </footer>
        </section>

        <aside class="rightbar">
          <button v-for="n in ['list', 'alarm', 'layers', 'chat']" :key="n" class="railbtn" :aria-label="n"><svg viewBox="0 0 44 44" v-html="rail[n]" /><b v-if="n === 'alarm'" class="badge">44</b></button>
          <div class="rail-bottom">
            <button v-for="n in ['radar', 'peaks', 'calendar', 'rss', 'bell']" :key="n" class="railbtn" :class="n === 'bell' ? 'tall' : 'short'" :aria-label="n"><svg viewBox="0 0 44 44" v-html="rail[n]" /></button>
            <button class="railbtn apps" aria-label="アプリ"><span><i v-for="k in 9" :key="k" /></span></button>
            <i class="rule" />
            <button class="railbtn" aria-label="ヘルプ"><svg viewBox="0 0 44 44" v-html="rail.help" /></button>
          </div>
        </aside>
      </div>
    </main>
  </div>
</template>

<style>
html, body { margin: 0; background: #fff; }
</style>

<style scoped>
.page {
  box-sizing: border-box;
  padding: 71px 104px 137px;
  overflow: hidden;
  background: #fff;
  color: #dbdbdb;
  font: 26px/32px Inter, "Noto Sans CJK JP", sans-serif;
}
button { margin: 0; padding: 0; border: 0; background: none; color: inherit; font: inherit; display: flex; align-items: center; justify-content: center; white-space: nowrap; flex: none; }
h1, h2 { margin: 0; font: inherit; }
svg { display: block; fill: none; stroke: currentColor; }
.plot, .avatar svg, .logo, .flag { stroke: none; }
.ic { width: 52px; height: 52px; flex: none; }
.window {
  border-radius: 20px;
  background: #2e2e2e;
  border: 1px solid #555;
  border-top: 2px solid #6c716c;
  outline: 1px solid #111;
  box-shadow: 0 35px 70px rgba(0, 0, 0, .72);
  overflow: hidden;
}
.titlebar { height: 70px; display: grid; grid-template-columns: 1fr auto 1fr; align-items: center; background: #262626; }
.titlebar h1 { color: #fff; font-weight: 600; font-size: 22px; }
.lights { display: flex; gap: 16px; padding-left: 39px; }
.lights i { width: 22px; height: 22px; border-radius: 50%; }
.red { background: #ed6a5e; }
.amber { background: #f5bf4f; }
.lime { background: #62c554; }
.title-tools { display: flex; gap: 28px; justify-content: flex-end; padding-right: 16px; color: #fff; }
.topbar { height: 71px; display: flex; align-items: center; gap: 7px; background: #0f0f0f; }
.avatar { width: 97px; }
.avatar svg { width: 52px; height: 52px; }
.symbol { width: 239px; height: 52px; border-radius: 26px; background: #3c3c3c; justify-content: space-between; padding-left: 23px; box-sizing: border-box; font-weight: 500; }
.symbol span { width: 45px; height: 45px; margin-right: 4px; border-radius: 50%; background: #0f0f0f; display: grid; place-items: center; }
.symbol .ic { width: 48px; height: 48px; }
.tool { width: 64px; height: 64px; border-radius: 12px; }
.symbol + .tool { margin: 0 -1px 0 4px; }
.on { background: #3c3c3c; }
.dim { color: #6a6a6a; }
.lit { background: #f0f0f0; color: #0f0f0f; }
.chev { width: 36px; height: 64px; overflow: hidden; }
.interval + .chev { margin-left: -5px; }
.sep { width: 2px; height: 41px; margin: 0 5px; background: #404040; flex: none; }
.interval { height: 64px; padding: 0 9px; border-radius: 12px; }
.templates { display: flex; gap: 11px; padding: 0 16px 0 3px; }
.templates button { width: 41px; height: 41px; box-sizing: border-box; border: 2px solid #4a4a4a; border-radius: 50%; font-size: 18px; font-weight: 500; }
.topright { margin-left: auto; padding-right: 9px; display: flex; align-items: center; gap: 7px; }
.save { position: relative; height: 71px; display: flex; align-items: center; margin: 0 10px 0 3px; }
.tooltip { position: absolute; z-index: 5; top: 78px; left: 50%; transform: translateX(-50%); width: 250px; height: 45px; border-radius: 4px; background: #3c3c3c; display: grid; place-items: center; font-size: 24px; white-space: nowrap; color: #f0f0f0; }
.tooltip::before { content: ""; position: absolute; top: -7px; left: 50%; margin-left: -12px; border: 12px solid transparent; border-top: 0; border-bottom: 7px solid #3c3c3c; }
.account { width: 41px; height: 41px; margin-right: 12px; border-radius: 50%; background: #f0f0f0; color: #0f0f0f; font-size: 20px; }
.pill { width: 149px; height: 52px; box-sizing: border-box; margin: 0 8px 0 5px; border: 2px solid #4a4a4a; border-radius: 26px; }
.solid { width: 97px; margin: 0; border: 0; background: #f0f0f0; color: #0f0f0f; font-weight: 500; }
.body { display: flex; align-items: stretch; padding-top: 7px; gap: 7px; }
.leftbar { width: 97px; box-sizing: border-box; flex: none; display: flex; flex-direction: column; align-items: center; gap: 7px; padding: 15px 0 41px; background: #0f0f0f; border-radius: 0 8px 0 0; }
.rule { width: 67px; height: 2px; margin: 8px 0; background: #4a4a4a; flex: none; }
.last { margin-top: auto; }
.center { flex: 1; min-width: 0; }
.frame { display: grid; grid-template-columns: minmax(0, 3804fr) minmax(0, 138fr); border: 4px solid #8c8c8c; border-radius: 8px; background: #000; overflow: hidden; }
.pane { position: relative; }
.plot { width: 100%; font-variant-numeric: tabular-nums; font-kerning: none; }
.t24 { font-size: 24px; }
.t20 { font-size: 20px; }
.strong { font-weight: 700; }
.axis-set svg { width: 34px; height: 34px; }
.legend { position: absolute; left: 13px; top: 12px; display: flex; flex-direction: column; gap: 14px; }
.legend-title { display: flex; align-items: center; height: 34px; }
.logo { width: 34px; height: 34px; margin-right: 8px; }
.legend h2 { font-size: 29px; }
.flag { width: 23px; height: 23px; margin: 0 20px; }
.market { width: 34px; height: 34px; border-radius: 50%; background: #242424; display: grid; place-items: center; margin-right: 15px; }
.market i { width: 19px; height: 8px; border-radius: 4px; background: #b8b8b8; }
.vol { font-size: 24px; }
.vol b { font-weight: 400; color: #459782; }
.quotes { display: flex; align-items: center; gap: 14px; }
.quotes span { font-size: 20px; }
.quote { width: 108px; height: 64px; box-sizing: border-box; border: 2px solid; border-radius: 12px; background: #0f0f0f; flex-direction: column; font-size: 20px; line-height: 26px; }
.quote b { font-size: 24px; font-weight: 600; }
.sell { color: #e0484d; }
.buy { color: #3461f7; }
.folds { display: flex; align-items: center; gap: 28px; }
.fold { width: 62px; height: 39px; box-sizing: border-box; border: 2px solid #3c3c3c; border-radius: 6px; gap: 8px; font-size: 24px; }
.fold svg { width: 20px; height: 20px; }
.sync { width: 34px; height: 34px; border-radius: 50%; background: #211c33; color: #a584ee; display: grid; place-items: center; }
.sync svg { width: 34px; height: 34px; stroke-width: 2; }
.gap { position: absolute; top: 15px; right: 17px; border-spacing: 2px 0; color: #fff; font-size: 19px; line-height: 35px; }
.gap th { padding: 0 9px; background: #16171b; font-weight: 400; }
.gap td { padding: 0 8px; background: #3e6b37; }
.float { position: absolute; left: 27.3%; top: 86%; height: 71px; display: flex; align-items: center; gap: 7px; padding-right: 3px; border-radius: 12px; background: #1f1f1f; }
.grip { width: 23px; height: 39px; margin: 0 9px 0 12px; flex: none; background: radial-gradient(circle, #5a5a5a 2px, transparent 3px) 0 0 / 12px 13px; }
.ink { flex-direction: column; justify-content: flex-start; }
.ink .ic { margin-top: -4px; }
.swatch { width: 41px; height: 8px; border-radius: 4px; background: #3461f7; margin-top: 4px; }
.rainbow { background: linear-gradient(90deg, #7a34f0, #4a8cf5, #5fe08a, #a6f03a, #f5e03a, #f0603a); }
.weight { gap: 14px; padding: 0 15px; margin-right: 2px; }
.weight i { width: 35px; height: 2px; background: #dbdbdb; }
.bottom { position: relative; height: 69px; margin-top: 2px; display: flex; align-items: center; gap: 10px; padding: 0 11px 0 21px; background: #0f0f0f; border-radius: 8px 8px 0 0; }
.range { padding: 0 7px; height: 64px; }
.bottom .sep { margin: 0 6px 0 4px; }
.favs { position: absolute; left: 48%; top: -2px; height: 71px; display: flex; align-items: center; gap: 7px; padding-right: 2px; border-radius: 12px; background: #1f1f1f; }
.clock { margin-left: auto; display: flex; align-items: center; gap: 15px; }
.rightbar { width: 84px; flex: none; display: flex; flex-direction: column; align-items: center; gap: 2px; padding-top: 4px; box-sizing: border-box; background: #0f0f0f; border-radius: 8px 0 0 0; }
.railbtn { position: relative; width: 84px; height: 84px; }
.railbtn svg { width: 82px; height: 82px; flex: none; }
.short { height: 82px; }
.tall { height: 90px; }
.badge { position: absolute; left: 33px; top: 7px; width: 43px; height: 30px; border-radius: 15px; background: #e0484d; color: #fff; font-size: 22px; font-weight: 500; line-height: 30px; }
.rail-bottom { margin-top: auto; padding-bottom: 1px; display: flex; flex-direction: column; align-items: center; }
.rail-bottom .rule { margin: 10px 0; }
.apps span { width: 64px; height: 64px; border-radius: 50%; background: #f0f0f0; display: grid; grid-template-columns: repeat(3, 8px); gap: 5px; place-content: center; }
.apps i { width: 8px; height: 8px; border-radius: 2px; background: #0f0f0f; }
</style>
